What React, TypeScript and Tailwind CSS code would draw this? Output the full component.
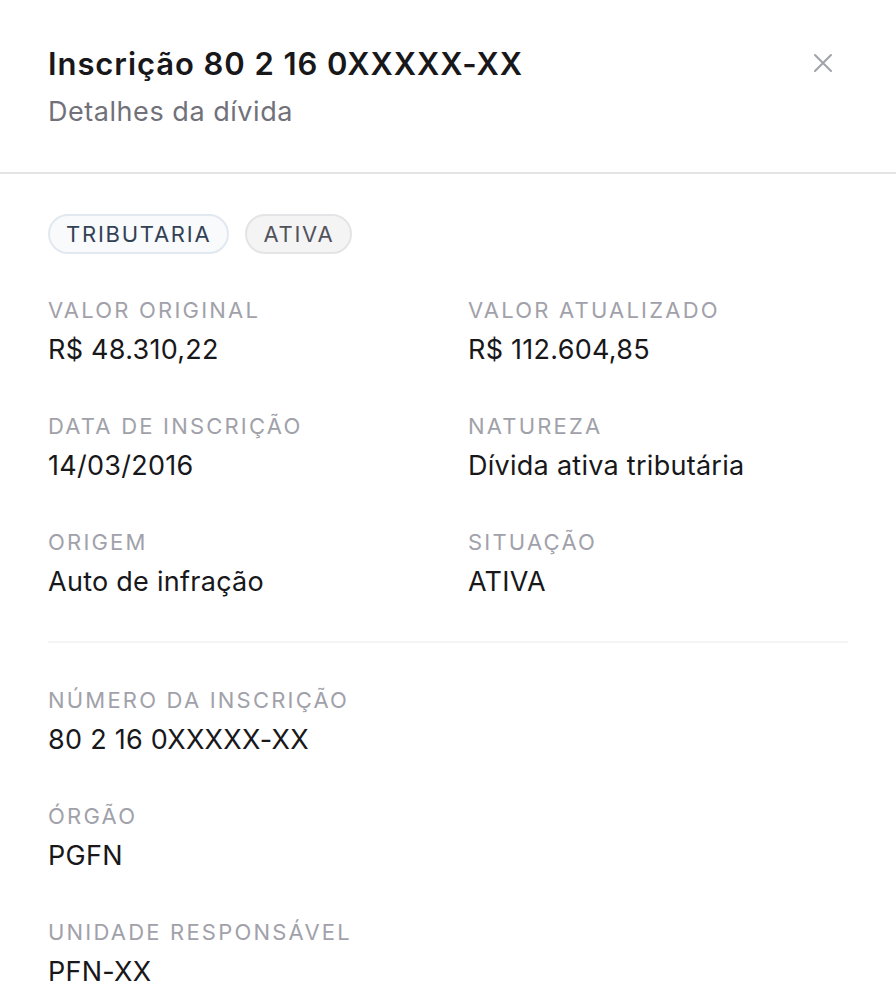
const ROWS = [
  [
    { label: 'Valor original', value: 'R$ 48.310,22' },
    { label: 'Valor atualizado', value: 'R$ 112.604,85' },
  ],
  [
    { label: 'Data de inscrição', value: '14/03/2016' },
    { label: 'Natureza', value: 'Dívida ativa tributária' },
  ],
  [
    { label: 'Origem', value: 'Auto de infração' },
    { label: 'Situação', value: 'ATIVA' },
  ],
];

const EXTRA = [
  { label: 'Número da inscrição', value: '80 2 16 0XXXXX-XX' },
  { label: 'Órgão', value: 'PGFN' },
  { label: 'Unidade responsável', value: 'PFN-XX' },
];

function Field({ label, value }: { label: string; value: string }) {
  return (
    <div className="flex flex-col">
      <div className="text-[22px] leading-[28px] uppercase tracking-[0.1em] text-[#a1a1aa]">
        {label}
      </div>
      <div className="mt-[10px] text-[27px] leading-[32px] tracking-[0.01em] text-[#18181b]">
        {value}
      </div>
    </div>
  );
}

export default function App() {
  return (
    <div
      className="min-h-[1000px] w-[896px] bg-white"
      style={{ fontFamily: 'Inter, "Noto Sans", sans-serif' }}
    >
      <header className="flex items-start justify-between border-b-2 border-[#e4e4e7] px-12 pt-[46px] pb-[44px]">
        <div className="flex flex-col">
          <h2 className="text-[31px] leading-[36px] font-semibold tracking-[0.03em] text-[#18181b]">
            Inscrição 80 2 16 0XXXXX-XX
          </h2>
          <p className="mt-[14px] text-[27px] leading-[32px] tracking-[0.02em] text-[#71717a]">
            Detalhes da dívida
          </p>
        </div>
        <button className="mt-[7px] mr-[15px] flex h-5 w-5 items-center justify-center text-[#a1a1aa]">
          <svg width="20" height="20" viewBox="0 0 20 20" fill="none" stroke="currentColor" strokeWidth="2" strokeLinecap="round">
            <path d="M2 2 18 18M18 2 2 18" />
          </svg>
        </button>
      </header>

      <div className="px-12 pt-[40px]">
        <div className="flex gap-4">
          <span className="flex h-10 items-center rounded-full border-2 border-[#e2e8f0] bg-[#f8fafc] px-4 text-[22px] tracking-[0.08em] text-[#334155]">
            TRIBUTARIA
          </span>
          <span className="flex h-10 items-center rounded-full border-2 border-[#e4e4e7] bg-[#f4f4f5] px-4 text-[22px] tracking-[0.08em] text-[#52525b]">
            ATIVA
          </span>
        </div>

        <div className="mt-[42px] grid grid-cols-2 gap-x-10 gap-y-[46px]">
          {ROWS.flat().map((f) => (
            <Field key={f.label} label={f.label} value={f.value} />
          ))}
        </div>

        <div className="my-[43px] h-[2px] bg-[#f4f4f5]" />

        <div className="flex flex-col gap-[46px]">
          {EXTRA.map((f) => (
            <Field key={f.label} label={f.label} value={f.value} />
          ))}
        </div>
      </div>
    </div>
  );
}
